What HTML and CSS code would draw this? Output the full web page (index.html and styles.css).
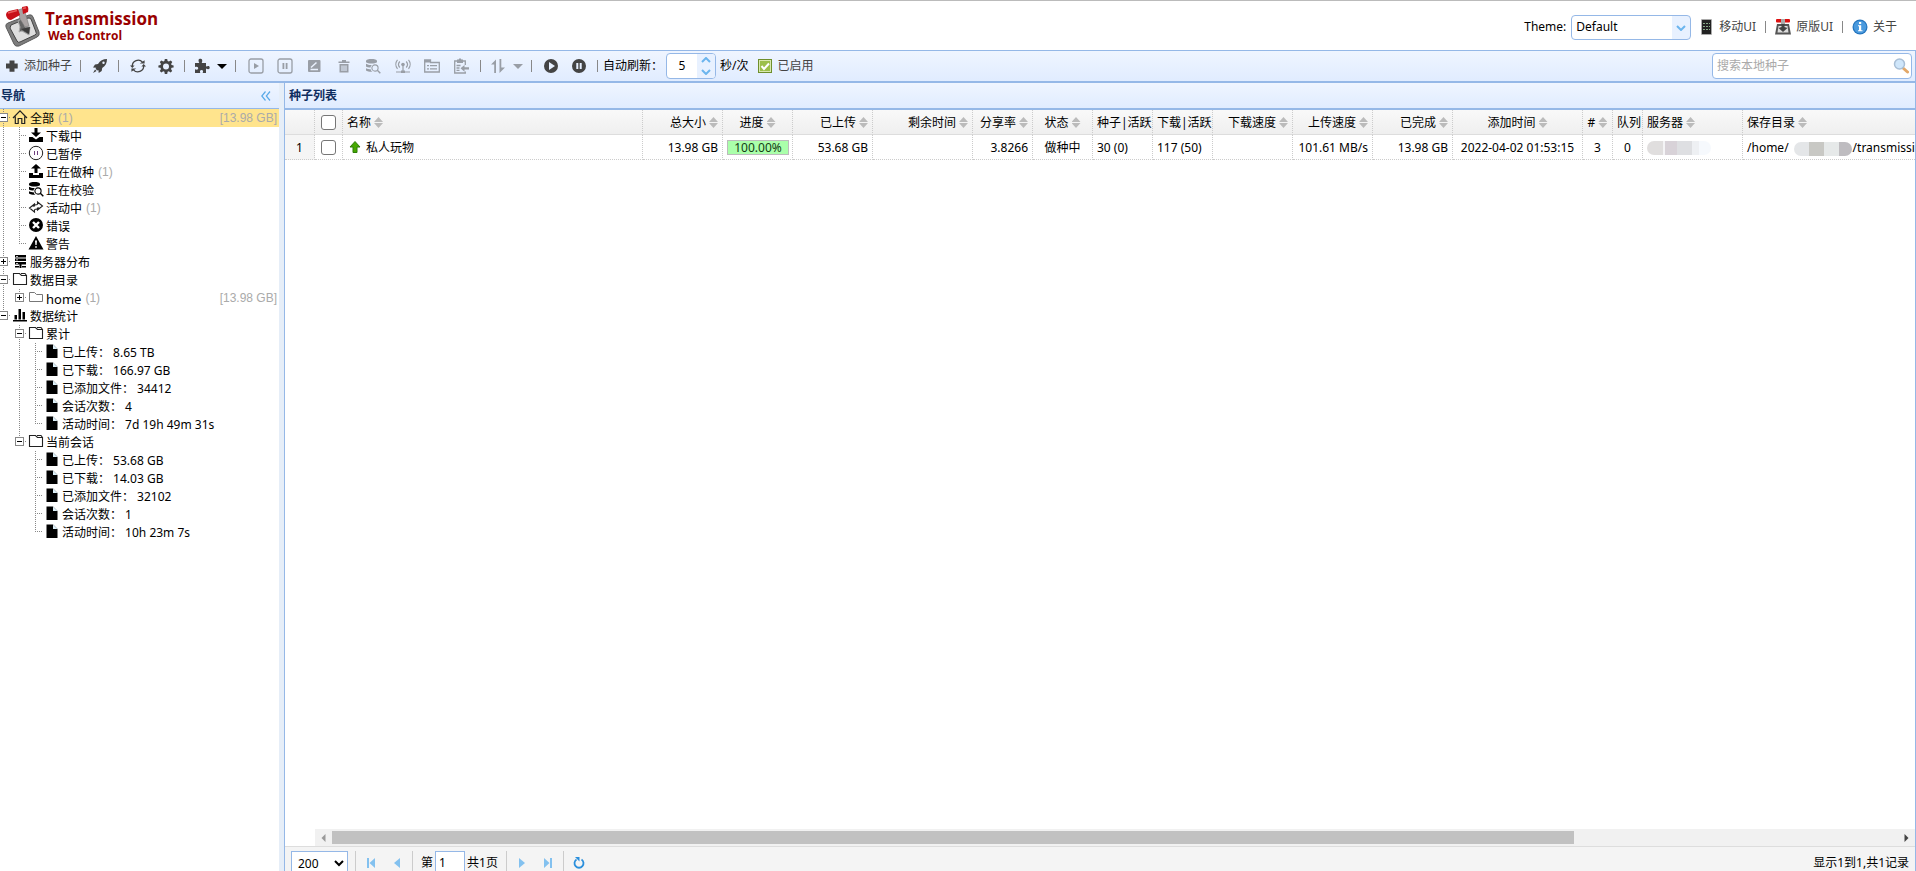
FILE: index.html
```html
<!DOCTYPE html>
<html lang="zh-CN">
<head>
<meta charset="utf-8">
<title>Transmission Web Control</title>
<link rel="stylesheet" href="styles.css">
</head>
<body>
<svg class="sprite" aria-hidden="true">
  <symbol id="plus" viewBox="0 0 16 16"><path d="M5.500 2.500h5V5.500h3.200v5h-3.200v3.200h-5v-3.200H2v-5h3.500z"/></symbol>
  <symbol id="rocket" viewBox="0 0 16 16"><path fill-rule="evenodd" d="M15 1c-4 0-7 1.500-9 5L3 6.500 1 9.500l3.200.2-.6 1.100 1.700 1.700 1.100-.6.300 3.100 3-2 .5-3C13.600 8 15 5 15 1zM11.500 3.500a1.200 1.200 0 1 1 0 2.400 1.200 1.200 0 0 1 0-2.400zM3 11.500 1 15l3.600-1.900z"/></symbol>
  <symbol id="refresh" viewBox="0 0 16 16"><path fill="none" stroke="currentColor" stroke-width="1.300" d="M2.300 8A5.800 5.800 0 0 1 12.500 4.200M13.700 8A5.800 5.800 0 0 1 3.500 11.800"/><path d="M9.800 5.600h4.800V2.200zM6.200 10.400H1.400v3.400zM0 7.500h4.600L2.300 10zM11.400 8.500H16L13.700 6z"/></symbol>
  <symbol id="gear" viewBox="0 0 16 16"><path fill-rule="evenodd" d="M6.800 1h2.400l.4 2 1.300.6 1.800-1.200 1.600 1.700L13.100 6l.5 1.100 2 .4v1.900l-2 .4-.6 1.300 1.200 1.800-1.600 1.600-1.800-1.200-1.200.5-.4 2.200H6.800l-.4-2.200-1.200-.5-1.800 1.200-1.600-1.600L3 11.100l-.6-1.300-2-.4V7.500l2-.4L3 6 1.800 4.100l1.600-1.700 1.800 1.200L6.400 3zM8 5.500a3 3 0 1 0 0 6 3 3 0 0 0 0-6z"/></symbol>
  <symbol id="puzzle" viewBox="0 0 16 16"><path d="M1 5h4.300C3.800 2.200 4.700.8 6.300.8S9 2.200 7.700 5H12v3.600c2.600-1.200 3.700-.4 3.700 1s-1.100 2.400-3.700 1V15H8.700c.8-2.500.1-3.100-1.200-3.100s-2 .8-1.200 3.100H1v-3.700c2.500.8 3.200 0 3.200-1S3.500 8.200 1 9.100z"/></symbol>
  <symbol id="caret" viewBox="0 0 10 10"><path d="M0 3h10L5 8z"/></symbol>
  <symbol id="playsq" viewBox="0 0 16 16"><rect x="1" y="1" width="14" height="14" rx="2" fill="none" stroke="currentColor" stroke-width="1.300"/><path d="M6 5l5 3-5 3z"/></symbol>
  <symbol id="pausesq" viewBox="0 0 16 16"><rect x="1" y="1" width="14" height="14" rx="2" fill="none" stroke="currentColor" stroke-width="1.300"/><path d="M5.500 5h1.800v6H5.500zM8.700 5h1.800v6H8.700z"/></symbol>
  <symbol id="edit" viewBox="0 0 16 16"><rect x="2" y="2" width="12.500" height="12" rx="1"/><path fill="none" stroke="#eaf1fd" stroke-width="1.500" d="M5 9.500l5.500-5M4.500 11.500h7.500"/></symbol>
  <symbol id="trash" viewBox="0 0 16 16"><path fill-rule="evenodd" d="M6 2h4v1.500h3.500V5h-11V3.500H6zM3.500 6h9v8.500h-9zM5.500 7.500V13h1V7.500zm2 0V13h1V7.500zm2 0V13h1V7.500z"/></symbol>
  <symbol id="dbsearch" viewBox="0 0 16 16"><path d="M1 3c0-2.600 11-2.600 11 0v1.200C10 6 3 6 1 4.200zM1 5.800c2 1.300 4 1.300 6 1.200-1 .8-1.300 1.600-1.400 2.500C3.500 9.500 2 9.200 1 8.500zM1 10.200c1.500.9 3 1 4.700 1 .2 1 .7 2 1.700 2.600-2.400.1-5.400-.3-6.400-1.300z"/><circle cx="10" cy="10" r="3.100" fill="none" stroke="currentColor" stroke-width="1.100"/><path stroke="currentColor" stroke-width="1.400" d="M12.300 12.300l3 3"/></symbol>
  <symbol id="cast" viewBox="0 0 16 16"><path fill="none" stroke="currentColor" stroke-width="1.200" d="M4.800 3.500a4.500 4.500 0 0 0 0 6M11.200 3.500a4.500 4.500 0 0 1 0 6M2.500 1.800a7 7 0 0 0 0 9M13.500 1.800a7 7 0 0 1 0 9M8 7v6M1 14h14"/><circle cx="8" cy="6.500" r="1.800"/><path d="M6 12.500h4v2.500H6z"/></symbol>
  <symbol id="flist" viewBox="0 0 16 16"><path fill="none" stroke="currentColor" stroke-width="1.300" d="M.7 14V2h5.800v2.500h8.800V14z"/><path d="M0 2h7v2.500H0zM3 7h2v1.200H3zM6 7h7v1.200H6zM3 10.300h2v1.200H3zM6 10.300h7v1.200H6z"/></symbol>
  <symbol id="clip" viewBox="0 0 16 16"><path fill="none" stroke="currentColor" stroke-width="1.300" d="M12.300 7V3H1.700v12h10.600v-1.500M3.500 7.500h4M3.500 10h3M3.500 12.300h3"/><path d="M4 1.500h1.500L7 0l1.500 1.500H10V5H4zM7.500 10.300 11.500 7v2.200H16v2.300h-4.500v2.200z"/></symbol>
  <symbol id="sort" viewBox="0 0 16 16"><path d="M1 6.500 6 1.500V15H4.200V6.500zM9.500 1h1.800v8.500H15L9.500 15z"/></symbol>
  <symbol id="playc" viewBox="0 0 16 16"><path fill-rule="evenodd" d="M8 1a7 7 0 1 1 0 14A7 7 0 0 1 8 1zM6 4v8l6-4z"/></symbol>
  <symbol id="pausec" viewBox="0 0 16 16"><path fill-rule="evenodd" d="M8 1a7 7 0 1 1 0 14A7 7 0 0 1 8 1zM5.300 5v6h2V5zm3.400 0v6h2V5z"/></symbol>
  <symbol id="home" viewBox="0 0 16 16"><path fill="none" stroke="#222" stroke-width="1.200" d="M1 9 8 1.800 15 9M3.300 7.500v7h2.900V9.500h3.600v5h2.900v-7"/></symbol>
  <symbol id="down" viewBox="0 0 16 16"><path d="M6.500 1h3v4.500H13L8 10 3 5.500h3.500zM1 10h3.500L8 12.500l3.500-2.500H15v5H1z"/></symbol>
  <symbol id="up" viewBox="0 0 16 16"><path d="M6.500 10h3V5.500H13L8 1 3 5.500h3.500zM1 10h4v2h6v-2h4v5H1z"/></symbol>
  <symbol id="pauseo" viewBox="0 0 16 16"><circle cx="8" cy="8" r="6.700" fill="#fff" stroke="#222"/><path fill="#704080" d="M6 6h1v4H6zM9 6h1v4H9z"/></symbol>
  <symbol id="active" viewBox="0 0 16 16"><path fill="none" stroke="#222" stroke-width="1.100" d="M6.500 10.500V13L1.500 9l5-4v2.500M6.500 10.500c3 0 3.500-.5 4.500-2M9.500 5.500V3l5 4-5 4V8.500M9.500 5.500c-3 0-3.500.5-4.500 2"/></symbol>
  <symbol id="error" viewBox="0 0 16 16"><circle cx="8" cy="8" r="7"/><path stroke="#fff" stroke-width="2.400" d="M5 5l6 6M11 5l-6 6"/></symbol>
  <symbol id="warn" viewBox="0 0 16 16"><path fill-rule="evenodd" d="M8 1l7.500 13.500H.5zM7 5.500l.4 4.500h1.200L9 5.500zm.2 5.700v1.600h1.600v-1.600z"/></symbol>
  <symbol id="server" viewBox="0 0 16 16"><path d="M3 2h11v2.500H3zM3 5.500h11V8H3zM3 9h11v2.500H3zM3 13h4v1.500H3zM10 13h4v1.500h-4zM7.500 11.500h2v3.500h-2z"/><path fill="#fff" d="M4 3h2v.8H4zM4 6.500h2v.8H4zM4 10h2v.8H4z"/></symbol>
  <symbol id="folder" viewBox="0 0 16 16"><path fill="#fff" stroke="#222" stroke-width="1.100" d="M1.500 13.500v-11h6l2 2h5v9zM9 2.500h4l1.500 2"/></symbol>
  <symbol id="foldergray" viewBox="0 0 16 16"><path fill="#fff" stroke="#777" d="M1.500 12.500v-9h5l2 2h6v7z"/></symbol>
  <symbol id="chart" viewBox="0 0 16 16"><path d="M1 13h14v1.500H1zM2.500 8H5v4.500H2.500zM6.500 2H9v10.500H6.500zM10.500 5H13v7.500h-2.500z"/></symbol>
  <symbol id="file" viewBox="0 0 16 16"><path d="M2.500 1.500H9L13.500 6v9h-11z"/><path fill="#dff2fb" d="M9 1.500V6h4.500z"/></symbol>
</svg>

<div class="app">
  <header class="header">
    <div class="brand">
      <svg class="logo" viewBox="0 0 36 42" aria-hidden="true">
        <path d="M4 18 25 10q3-1 4 2l6 15q1 4-2 5l-18 9q-4 1-5-2L2 22q-1-3 2-4z" fill="#7d7d7d" stroke="#5c5c5c"/>
        <path d="M7 20 24 13q2 0 3 1l5 13q1 2-1 3l-15 7q-2 1-3-1L6 23z" fill="#dedede" stroke="#444"/>
        <path d="M14 16l5-3 2 9 5 0-1 8-7-4-3 1 1-5z" fill="#666" stroke="#aaa"/>
        <path d="M17 24l8 5 1-7z" fill="#3c3c3c"/>
        <path d="M14 5l6-2 3 11 2 7-4 1-5-8z" fill="#a9a3a3" stroke="#777" stroke-width=".6"/>
        <path d="M2 10q0-3 3-4l9-2 2 6-9 5q-4 0-5-5zM18 2l5-1q2 1 1 6l-5 2z" fill="#c81018"/>
        <path d="M4 8l9-2.500M19 3.500l3-.8" stroke="#ea5a5a" stroke-width="1.500"/>
      </svg>
      <div class="brand-text"><span class="brand-name">Transmission</span><span class="brand-sub">Web Control</span></div>
    </div>
    <div class="links">
      <label for="theme">Theme:</label>
      <span class="combo"><select id="theme"><option>Default</option></select><svg class="combo-arrow" viewBox="0 0 10 6"><path d="M1 1l4 4 4-4"/></svg></span>
      <a href="#"><svg class="ic" viewBox="0 0 16 16"><rect x="3" width="11" height="16" rx="1" fill="#aaa"/><rect x="4" y="1" width="9" height="14" fill="#222"/><path stroke="#8a8" stroke-dasharray="2 1" d="M5 4.500h7M5 7.500h7M5 10.500h7"/></svg>移动UI</a>
      <i class="sep"></i>
      <a href="#"><svg class="ic" viewBox="0 0 16 16"><path d="M2 5h12l2 10.500H0z" fill="#555"/><path d="M3.500 7h9l1 6.500h-11z" fill="#ddd"/><path d="M6.500 3h3v5l3 1-4.500 4-4.500-4 3-1z" fill="#444"/><rect x="1" y="0" width="14" height="3.500" rx="1" fill="#d11"/><path d="M6 0h4v5H6z" fill="#aaa"/></svg>原版UI</a>
      <i class="sep"></i>
      <a href="#"><svg class="ic" viewBox="0 0 16 16"><circle cx="8" cy="8" r="7.500" fill="#2374bd"/><circle cx="8" cy="8" r="6.300" fill="#4a9ade"/><path fill="#fff" d="M7 3h2.200v2H7zM6 6.300h3.200v5h1.300v1H6v-1h1v-4H6z"/></svg>关于</a>
    </div>
  </header>

  <div class="toolbar">
    <button class="add"><svg class="ic"><use href="#plus"/></svg>添加种子</button>
    <i class="sep"></i>
    <button class="tb" aria-label="rocket"><svg class="ic"><use href="#rocket"/></svg></button>
    <i class="sep"></i>
    <button class="tb"><svg class="ic"><use href="#refresh"/></svg></button>
    <button class="tb"><svg class="ic"><use href="#gear"/></svg></button>
    <i class="sep"></i>
    <button class="tb drop"><svg class="ic"><use href="#puzzle"/></svg><svg class="car black"><use href="#caret"/></svg></button>
    <i class="sep"></i>
    <div class="group">
      <button disabled><svg class="ic"><use href="#playsq"/></svg></button>
      <button disabled><svg class="ic"><use href="#pausesq"/></svg></button>
      <button disabled><svg class="ic"><use href="#edit"/></svg></button>
      <button disabled><svg class="ic"><use href="#trash"/></svg></button>
      <button disabled><svg class="ic"><use href="#dbsearch"/></svg></button>
      <button disabled><svg class="ic"><use href="#cast"/></svg></button>
      <button disabled><svg class="ic"><use href="#flist"/></svg></button>
      <button disabled><svg class="ic"><use href="#clip"/></svg></button>
    </div>
    <i class="sep"></i>
    <button class="tb drop" disabled><svg class="ic"><use href="#sort"/></svg><svg class="car"><use href="#caret"/></svg></button>
    <i class="sep"></i>
    <button class="tb"><svg class="ic"><use href="#playc"/></svg></button>
    <button class="tb"><svg class="ic"><use href="#pausec"/></svg></button>
    <i class="sep"></i>
    <label class="auto" for="interval">自动刷新：</label>
    <span class="spinner"><input id="interval" type="text" value="5"><span class="arrows"><svg viewBox="0 0 10 6"><path d="M1 5l4-4 4 4"/></svg><svg viewBox="0 0 10 6"><path d="M1 1l4 4 4-4"/></svg></span></span>
    <span class="unit">秒/次</span>
    <button class="enabled"><svg class="ic" viewBox="0 0 16 16"><rect x="1.500" y="1.500" width="13" height="13" fill="#9cbf4b" stroke="#6f8f2c"/><rect x="2.500" y="2.500" width="11" height="11" fill="none" stroke="#d9e8b0"/><path d="M4.500 8l2.500 3 5-5.500" fill="none" stroke="#fff" stroke-width="2"/></svg>已启用</button>
    <span class="search"><input type="text" aria-label="搜索本地种子" placeholder="搜索本地种子"><svg class="ic" viewBox="0 0 16 16"><path d="M10 10l4.500 4" stroke="#e3a868" stroke-width="3" stroke-linecap="round"/><circle cx="6.500" cy="6" r="5" fill="#cfe6fa" stroke="#a9bfd6" stroke-width="1.500"/></svg></span>
  </div>

  <div class="body">
    <aside class="side">
      <div class="phead"><span>导航</span><button class="collapse" aria-label="collapse"><svg viewBox="0 0 10 10"><path d="M4.500.5 0.800 5l3.700 4.500M9 .5 5.300 5 9 9.500"/></svg></button></div>
      <div class="tree">
        <div class="row sel"><i class="ln t"><b class="tg"></b></i><svg class="ic"><use href="#home"/></svg><span>全部</span><em>(1)</em><em class="size">[13.98 GB]</em></div>
        <div class="row"><i class="ln v"></i><i class="ln t"></i><svg class="ic"><use href="#down"/></svg><span>下载中</span></div>
        <div class="row"><i class="ln v"></i><i class="ln t"></i><svg class="ic"><use href="#pauseo"/></svg><span>已暂停</span></div>
        <div class="row"><i class="ln v"></i><i class="ln t"></i><svg class="ic"><use href="#up"/></svg><span>正在做种</span><em>(1)</em></div>
        <div class="row"><i class="ln v"></i><i class="ln t"></i><svg class="ic"><use href="#dbsearch"/></svg><span>正在校验</span></div>
        <div class="row"><i class="ln v"></i><i class="ln t"></i><svg class="ic"><use href="#active"/></svg><span>活动中</span><em>(1)</em></div>
        <div class="row"><i class="ln v"></i><i class="ln t"></i><svg class="ic"><use href="#error"/></svg><span>错误</span></div>
        <div class="row"><i class="ln v"></i><i class="ln e"></i><svg class="ic"><use href="#warn"/></svg><span>警告</span></div>
        <div class="row"><i class="ln t"><b class="tg plus"></b></i><svg class="ic"><use href="#server"/></svg><span>服务器分布</span></div>
        <div class="row"><i class="ln t"><b class="tg"></b></i><svg class="ic"><use href="#folder"/></svg><span>数据目录</span></div>
        <div class="row"><i class="ln v"></i><i class="ln e"><b class="tg plus"></b></i><svg class="ic"><use href="#foldergray"/></svg><span class="latin">home</span><em>(1)</em><em class="size">[13.98 GB]</em></div>
        <div class="row"><i class="ln e"><b class="tg"></b></i><svg class="ic"><use href="#chart"/></svg><span>数据统计</span></div>
        <div class="row"><i class="ln"></i><i class="ln t"><b class="tg"></b></i><svg class="ic"><use href="#folder"/></svg><span>累计</span></div>
        <div class="row"><i class="ln"></i><i class="ln v"></i><i class="ln t"></i><svg class="ic"><use href="#file"/></svg><span>已上传： 8.65 TB</span></div>
        <div class="row"><i class="ln"></i><i class="ln v"></i><i class="ln t"></i><svg class="ic"><use href="#file"/></svg><span>已下载： 166.97 GB</span></div>
        <div class="row"><i class="ln"></i><i class="ln v"></i><i class="ln t"></i><svg class="ic"><use href="#file"/></svg><span>已添加文件： 34412</span></div>
        <div class="row"><i class="ln"></i><i class="ln v"></i><i class="ln t"></i><svg class="ic"><use href="#file"/></svg><span>会话次数： 4</span></div>
        <div class="row"><i class="ln"></i><i class="ln v"></i><i class="ln e"></i><svg class="ic"><use href="#file"/></svg><span>活动时间： 7d 19h 49m 31s</span></div>
        <div class="row"><i class="ln"></i><i class="ln e"><b class="tg"></b></i><svg class="ic"><use href="#folder"/></svg><span>当前会话</span></div>
        <div class="row"><i class="ln"></i><i class="ln"></i><i class="ln t"></i><svg class="ic"><use href="#file"/></svg><span>已上传： 53.68 GB</span></div>
        <div class="row"><i class="ln"></i><i class="ln"></i><i class="ln t"></i><svg class="ic"><use href="#file"/></svg><span>已下载： 14.03 GB</span></div>
        <div class="row"><i class="ln"></i><i class="ln"></i><i class="ln t"></i><svg class="ic"><use href="#file"/></svg><span>已添加文件： 32102</span></div>
        <div class="row"><i class="ln"></i><i class="ln"></i><i class="ln t"></i><svg class="ic"><use href="#file"/></svg><span>会话次数： 1</span></div>
        <div class="row"><i class="ln"></i><i class="ln"></i><i class="ln e"></i><svg class="ic"><use href="#file"/></svg><span>活动时间： 10h 23m 7s</span></div>
      </div>
    </aside>

    <main class="main">
      <div class="phead list-head"><span>种子列表</span></div>
      <div class="grid">
        <table>
          <colgroup><col class="w30"><col class="w28"><col class="w300"><col class="w80"><col class="w70"><col class="w80"><col class="w100"><col class="w60"><col class="w60"><col class="w60"><col class="w60"><col class="w80"><col class="w80"><col class="w80"><col class="w130"><col class="w30"><col class="w30"><col class="w100"><col class="w300"></colgroup>
          <thead><tr>
            <th></th><th class="ck"><input type="checkbox" aria-label="全选"></th>
            <th>名称<i class="so"></i></th><th class="r">总大小<i class="so"></i></th><th class="c">进度<i class="so"></i></th><th class="r">已上传<i class="so"></i></th><th class="r">剩余时间<i class="so"></i></th><th class="r">分享率<i class="so"></i></th><th class="c">状态<i class="so"></i></th><th>种子|活跃</th><th>下载|活跃</th><th class="r">下载速度<i class="so"></i></th><th class="r">上传速度<i class="so"></i></th><th class="r">已完成<i class="so"></i></th><th class="c">添加时间<i class="so"></i></th><th class="c">#<i class="so"></i></th><th>队列</th><th>服务器<i class="so"></i></th><th>保存目录<i class="so"></i></th>
          </tr></thead>
          <tbody><tr>
            <td class="c num">1</td><td class="ck"><input type="checkbox" aria-label="私人玩物"></td>
            <td><svg class="seed" viewBox="0 0 12 12"><path d="M6 .5 11 6H8v5.500H4V6H1z" fill="#46a800" stroke="#2d7d0a"/></svg>私人玩物</td><td class="r">13.98 GB</td><td class="pc"><div class="prog">100.00%</div></td><td class="r">53.68 GB</td><td></td><td class="r">3.8266</td><td class="c">做种中</td><td>30 (0)</td><td>117 (50)</td><td></td><td class="r">101.61 MB/s</td><td class="r">13.98 GB</td><td class="c">2022-04-02 01:53:15</td><td class="c">3</td><td class="c">0</td><td class="pc"><span class="blur srv"></span></td><td>/home/<span class="blur dir"></span>/transmissi</td>
          </tr></tbody>
        </table>
        <div class="hscroll"><svg viewBox="0 0 16 16"><path fill="#999" d="M10 4v8L6 8z"/></svg><div class="track"><div class="thumb"></div></div><svg viewBox="0 0 16 16"><path fill="#444" d="M6 4v8l4-4z"/></svg></div>
      </div>
      <div class="pager">
        <select aria-label="每页条数"><option>200</option></select>
        <i class="psep"></i>
        <button><svg viewBox="0 0 12 12"><path d="M2 1h2v10H2zM10 1v10L4.500 6z"/></svg></button>
        <button><svg viewBox="0 0 12 12"><path d="M9 1v10L3 6z"/></svg></button>
        <i class="psep"></i>
        <label for="page">第</label><input id="page" type="text" value="1"><span class="total">共1页</span>
        <i class="psep"></i>
        <button><svg viewBox="0 0 12 12"><path d="M3 1v10l6-5z"/></svg></button>
        <button><svg viewBox="0 0 12 12"><path d="M2 1v10l5.500-5zM8 1h2v10H8z"/></svg></button>
        <i class="psep"></i>
        <button><svg viewBox="0 0 12 12"><path fill="none" stroke="#2a8fdc" stroke-width="1.800" d="M3.500 2.500A4.500 4.500 0 1 0 8.500 2.500"/><path fill="#2a8fdc" d="M2 0h4.500v4.500z"/></svg></button>
        <span class="info">显示1到1,共1记录</span>
      </div>
    </main>
  </div>
</div>
</body>
</html>
```
FILE: styles.css
```css
* { box-sizing: border-box; }
body { margin: 0; font: 12px/16px "Noto Sans", "Noto Sans CJK SC", sans-serif; color: #000; background: #fff; overflow: hidden; }
button, input, select { font: inherit; color: inherit; }
button { border: 0; padding: 0; margin: 0; background: none; display: flex; align-items: center; justify-content: center; }
.sprite { display: none; }
.ic { width: 16px; height: 16px; flex: none; fill: currentColor; }
.app { height: 100vh; display: flex; flex-direction: column; border-top: 1px solid #bbb; }

.header { height: 49px; flex: none; display: flex; justify-content: space-between; }
.brand { display: flex; padding: 4px 0 0 4px; }
.logo { width: 36px; height: 42px; }
.brand-text { display: flex; flex-direction: column; padding: 4px 0 0 5px; font-family: "Open Sans", sans-serif; font-weight: 700; color: #990000; }
.brand-name { font-size: 17px; line-height: 20px; }
.brand-sub { font-size: 12px; line-height: 14px; padding-left: 3px; }
.links { display: flex; align-items: center; padding: 2px 19px 0 0; color: #444; height: 50px; }
.links label { color: #000; margin-right: 5px; }
.links a { color: #444; text-decoration: none; display: flex; align-items: center; gap: 5px; }
.combo { position: relative; width: 120px; height: 25px; margin-right: 7px; border: 1px solid #95b8e7; border-radius: 4px; overflow: hidden; background: linear-gradient(90deg, #fff 0 100px, #e8f1ff 100px); }
.combo select { appearance: none; width: 100%; height: 100%; border: 0; background: none; padding: 0 4px; color: #000; }
.combo-arrow { position: absolute; right: 4px; top: 9px; width: 10px; height: 6px; pointer-events: none; }
.combo-arrow path, .arrows path { fill: none; stroke: #6bb5ee; stroke-width: 2; }
.sep { width: 1px; height: 12px; background: #888; margin: 0 9px; flex: none; }

.toolbar { height: 33px; flex: none; display: flex; align-items: center; border: solid #95b8e7; border-width: 1px 1px 2px 0; background: linear-gradient(#eff5ff, #e0ecff); color: #444; padding: 0 3px 1px 4px; }
.toolbar .sep { margin: 0 5px 0 4px; }
.add { gap: 4px; margin-right: 4px; }
.tb { width: 28px; }
.drop { width: 41px; gap: 7px; }
.car { width: 10px; height: 10px; fill: currentColor; }
.black { fill: #000; }
.group { display: flex; width: 235px; }
.group button { flex: 1; }
button:disabled { color: #999ea6; }
.auto { color: #000; width: 63px; white-space: nowrap; }
.spinner { display: flex; width: 50px; height: 26px; border: 1px solid #95b8e7; border-radius: 4px; background: #fff; overflow: hidden; }
.spinner input { width: 30px; border: 0; padding: 0; text-align: center; background: none; color: #000; }
.arrows { width: 18px; background: #e8f1ff; display: flex; flex-direction: column; align-items: center; justify-content: space-around; }
.arrows svg { width: 10px; height: 6px; }
.unit { color: #000; margin: 0 9px 0 4px; }
.enabled { gap: 4px; }
.search { margin-left: auto; display: flex; align-items: center; width: 200px; height: 26px; background: #fff; border: 1px solid #95b8e7; border-radius: 4px; padding: 0 2px 0 4px; }
.search input { flex: 1; min-width: 0; border: 0; padding: 0; background: none; outline: 0; }
.search input::placeholder { color: #aaa; }

.body { flex: 1; min-height: 0; display: flex; background: #e6eef8; }
.side { width: 279px; flex: none; background: #fff; overflow: hidden; }
.phead { height: 26px; display: flex; align-items: center; justify-content: space-between; padding: 1px 8px 0 1px; border-bottom: 1px solid #95b8e7; background: linear-gradient(#eff5ff, #e0ecff); color: #0e2d5f; font-weight: 700; }
.list-head { height: 27px; border-bottom-width: 2px; padding-left: 4px; }
.collapse svg { width: 10px; height: 10px; fill: none; stroke: #5aaae8; stroke-width: 1.2; }
.tree { margin-left: -5px; }
.row { height: 18px; display: flex; align-items: center; white-space: nowrap; padding-right: 2px; }
.row.sel { background: #ffe48d; }
.row .ic { margin: 0 2px 2px 1px; }
.row span { padding-top: 2px; }
.row em { font: 12px/18px "Liberation Sans", sans-serif; color: #aaa; margin-left: 4px; }
.row em.size { margin-left: auto; }
.latin { font-size: 13px; }
.ln { width: 16px; height: 18px; flex: none; display: flex; align-items: center; justify-content: center; background-repeat: no-repeat; }
.v, .t, .e { --dv: repeating-linear-gradient(#888 0 1px, transparent 1px 2px); --dh: repeating-linear-gradient(90deg, #888 0 1px, transparent 1px 2px); }
.v { background-image: var(--dv); background-size: 1px 18px; background-position: 8px 0; }
.t { background-image: var(--dv), var(--dh); background-size: 1px 18px, 8px 1px; background-position: 8px 0, 8px 8px; }
.e { background-image: var(--dv), var(--dh); background-size: 1px 9px, 8px 1px; background-position: 8px 0, 8px 8px; }
.tg { width: 9px; height: 9px; margin: 0 0 1px 1px; border: 1px solid #888; background: linear-gradient(#000, #000) center / 5px 1px no-repeat #fff; }
.tg.plus { background: linear-gradient(#000, #000) center / 5px 1px no-repeat, linear-gradient(#000, #000) center / 1px 5px no-repeat #fff; }

.main { flex: 1; min-width: 0; margin-left: 5px; display: flex; flex-direction: column; background: #fff; border: solid #95b8e7; border-width: 0 1px; }
.main .phead { flex: none; }
.grid { flex: 1; min-height: 0; overflow: hidden; display: flex; flex-direction: column; }
table { table-layout: fixed; border-collapse: separate; border-spacing: 0; width: 1758px; flex: none; }
th, td { height: 25px; padding: 2px 4px 0; border-right: 1px dotted #ccc; border-bottom: 1px dotted #ccc; font-weight: 400; text-align: left; white-space: nowrap; overflow: hidden; }
th { border-bottom: 1px solid #ddd; background: linear-gradient(#f9f9f9, #efefef); }
.w28 { width: 28px; } .w30 { width: 30px; } .w60 { width: 60px; } .w70 { width: 70px; } .w80 { width: 80px; }
.w100 { width: 100px; } .w130 { width: 130px; } .w300 { width: 300px; }
.r { text-align: right; }
.c { text-align: center; }
.num { background: #f5f5f5; }
.ck { padding: 0; text-align: center; }
.ck input { appearance: none; width: 15px; height: 15px; margin: 0; border: 1px solid #767676; border-radius: 3px; background: #fff; vertical-align: middle; }
.so { display: inline-block; width: 9px; height: 11px; margin-left: 3px; vertical-align: -1px; background: #bbb; clip-path: polygon(50% 0, 100% 45%, 0 45%, 0 55%, 100% 55%, 50% 100%, 0 55%, 0 45%); }
.seed { width: 12px; height: 12px; margin: 0 5px 0 2px; vertical-align: -1px; }
.pc { padding: 0 3px 0 4px; }
.pc .prog { height: 15px; line-height: 13px; border: 1px solid #bbb; background: #aaffaa; text-align: center; color: #143c14; }
.blur { display: inline-block; height: 14px; border-radius: 7px; vertical-align: middle; }
.srv { width: 64px; background: linear-gradient(90deg, #e0dede 0 16px, #f4f4f6 16px 18px, #d8d2d8 18px 30px, #dedfe2 30px 45px, #eef0f3 45px 52px, #f6f9fd 52px); }
.dir { width: 58px; margin: 0 1px 0 5px; background: linear-gradient(90deg, #e4e6e8 0 15px, #c8c8c4 15px 30px, #e6e9e9 30px 45px, #bebcc0 45px); }
.hscroll { margin: auto 0 0 30px; height: 17px; background: #f1f1f1; display: flex; align-items: center; flex: none; }
.hscroll svg { width: 17px; height: 16px; flex: none; }
.track { flex: 1; }
.thumb { width: 79.3%; height: 13px; background: #c1c1c1; }

.pager { height: 25px; flex: none; display: flex; align-items: flex-start; overflow: hidden; border-top: 1px solid #ddd; background: #f4f4f4; padding: 4px 6px 0 6px; line-height: 24px; }
.pager select { width: 57px; height: 24px; border: 1px solid #95b8e7; background: #fff; padding: 0 2px; margin-right: 5px; }
.psep { width: 1px; height: 24px; background: #ccc; margin: 0 2px; flex: none; }
.pager button { width: 26px; height: 24px; fill: #83c1ef; }
.pager button svg { width: 12px; height: 12px; }
.pager input { width: 30px; height: 24px; border: 1px solid #95b8e7; padding: 0 3px; background: #fff; }
.pager label { margin: 0 2px 0 6px; }
.total { margin: 0 6px 0 2px; }
.info { margin-left: auto; }
```
